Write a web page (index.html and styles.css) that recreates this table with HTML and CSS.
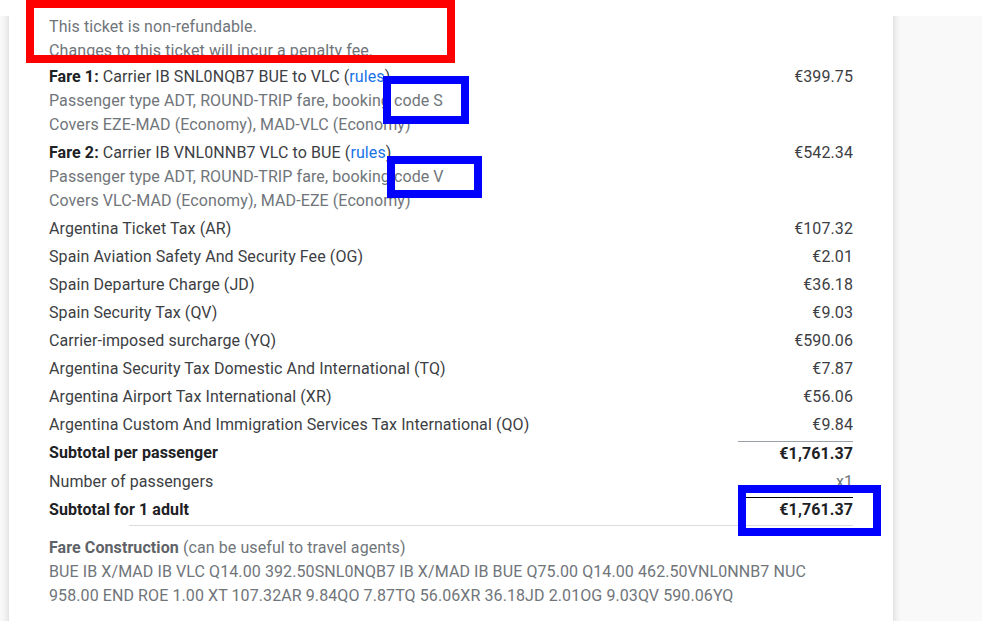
FILE: index.html
```html
<!DOCTYPE html>
<html lang="en">
<head>
  <meta charset="UTF-8" />
  <title>Fare breakdown</title>
  <link rel="stylesheet" href="styles.css">
</head>
<body>

<div class="page">
  <div class="card">
    <div class="notice">
      <div>This ticket is non-refundable.</div>
      <div>Changes to this ticket will incur a penalty fee.</div>
    </div>

    <!-- Fares -->
    <div class="row fare">
      <div>
        <div><b>Fare 1:</b> Carrier IB SNL0NQB7 BUE to VLC (<a href="#">rules</a>)</div>
        <div class="sub">Passenger type ADT, ROUND-TRIP fare, booking code S</div>
        <div class="sub">Covers EZE-MAD (Economy), MAD-VLC (Economy)</div>
      </div>
      <div class="amt">€399.75</div>
    </div>
    <div class="row fare">
      <div>
        <div><b>Fare 2:</b> Carrier IB VNL0NNB7 VLC to BUE (<a href="#">rules</a>)</div>
        <div class="sub">Passenger type ADT, ROUND-TRIP fare, booking code V</div>
        <div class="sub">Covers VLC-MAD (Economy), MAD-EZE (Economy)</div>
      </div>
      <div class="amt">€542.34</div>
    </div>

    <!-- Taxes -->
    <div class="row"><div>Argentina Ticket Tax (AR)</div><div class="amt">€107.32</div></div>
    <div class="row"><div>Spain Aviation Safety And Security Fee (OG)</div><div class="amt">€2.01</div></div>
    <div class="row"><div>Spain Departure Charge (JD)</div><div class="amt">€36.18</div></div>
    <div class="row"><div>Spain Security Tax (QV)</div><div class="amt">€9.03</div></div>
    <div class="row"><div>Carrier-imposed surcharge (YQ)</div><div class="amt">€590.06</div></div>
    <div class="row"><div>Argentina Security Tax Domestic And International (TQ)</div><div class="amt">€7.87</div></div>
    <div class="row"><div>Argentina Airport Tax International (XR)</div><div class="amt">€56.06</div></div>
    <div class="row"><div>Argentina Custom And Immigration Services Tax International (QO)</div><div class="amt">€9.84</div></div>

    <!-- Totals -->
    <div class="row total">
      <div><b>Subtotal per passenger</b></div>
      <div class="amt sum">€1,761.37</div>
    </div>
    <div class="row">
      <div>Number of passengers</div>
      <div class="amt muted">x1</div>
    </div>
    <div class="row total final">
      <div><b>Subtotal for 1 adult</b></div>
      <div class="amt sum black">€1,761.37</div>
    </div>

    <div class="construction">
      <div><b>Fare Construction</b> (can be useful to travel agents)</div>
      <div>BUE IB X/MAD IB VLC Q14.00 392.50SNL0NQB7 IB X/MAD IB BUE Q75.00 Q14.00 462.50VNL0NNB7 NUC 958.00 END ROE 1.00 XT 107.32AR 9.84QO 7.87TQ 56.06XR 36.18JD 2.01OG 9.03QV 590.06YQ</div>
    </div>
  </div>
</div>

<!-- annotation boxes -->
<div class="mark red" style="left:26px; top:0; width:429px; height:63px"></div>
<div class="mark blue" style="left:383px; top:76px; width:86px; height:48px"></div>
<div class="mark blue" style="left:387px; top:156px; width:95px; height:42px"></div>
<div class="mark blue" style="left:738px; top:485px; width:143px; height:51px"></div>

</body>
</html>
```

FILE: styles.css
```css
body { margin: 0; background: #fff; font-family: Roboto, "Liberation Sans", sans-serif; font-size: 16px; line-height: 24px; letter-spacing: 0.09px; color: #3c4043; }
.page { margin-top: 16px; height: 605px; background: #f9f9f9; padding-left: 9px; overflow: hidden; }
.card { width: 884px; margin-top: -9px; padding: 8px 40px 40px; box-sizing: border-box; background: #fff; box-shadow: 0 0 8px rgba(0,0,0,0.18); }
.notice { color: #70757a; margin-bottom: 2px; }
.row { display: flex; justify-content: space-between; margin-bottom: 4px; }
.fare b { color: #202124; }
.sub { color: #70757a; }
a { color: #1a73e8; text-decoration: none; }
.amt { text-align: right; white-space: nowrap; }
.sum { width: 115px; font-weight: 700; color: #202124; }
.total b { color: #202124; }
.total .sum { border-top: 1px solid #9aa0a6; }
.final .sum { border-top-color: #000; margin-top: -1px; }
.muted { color: #70757a; }
.final { padding-bottom: 4px; margin-bottom: 0; position: relative; }
.final::after { content: ""; position: absolute; left: 80px; right: 0; bottom: 0; border-bottom: 1px solid #dadce0; }
.construction { margin-top: 10px; color: #70757a; }
.construction b { color: #5f6368; }
.mark { position: absolute; box-sizing: border-box; border: 8px solid; }
.red { border-color: #ff0000; }
.blue { border-color: #0000ff; }
```
